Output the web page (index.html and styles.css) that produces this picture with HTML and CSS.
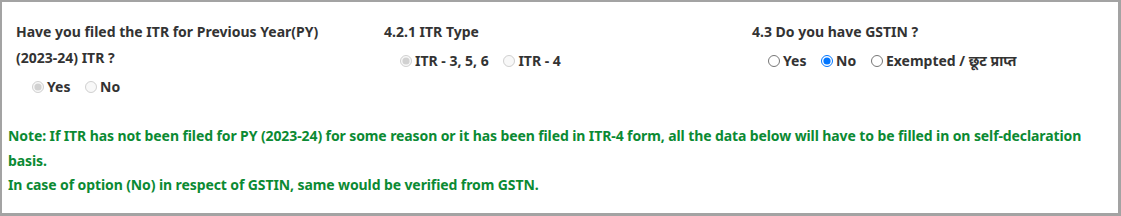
FILE: index.html
```html
<!DOCTYPE html>
<html lang="en">
<head>
  <meta charset="UTF-8">
  <title>ITR / GSTIN</title>
  <link rel="stylesheet" href="styles.css">
</head>
<body>
  <div class="marco">
    <div class="fila">
      <div class="campo">
        <div class="pregunta">Have you filed the ITR for Previous Year(PY) (2023-24) ITR ?</div>
        <div class="opciones">
          <label><input type="radio" name="itr" checked disabled>Yes</label>
          <label><input type="radio" name="itr" disabled>No</label>
        </div>
      </div>

      <div class="campo">
        <div class="pregunta">4.2.1 ITR Type</div>
        <div class="opciones">
          <label><input type="radio" name="tipo" checked disabled>ITR - 3, 5, 6</label>
          <label><input type="radio" name="tipo" disabled>ITR - 4</label>
        </div>
      </div>

      <div class="campo">
        <div class="pregunta">4.3 Do you have GSTIN ?</div>
        <div class="opciones">
          <label><input type="radio" name="gst">Yes</label>
          <label><input type="radio" name="gst" checked>No</label>
          <label><input type="radio" name="gst">Exempted / छूट प्राप्त</label>
        </div>
      </div>
    </div>

    <div class="nota">
      Note: If ITR has not been filed for PY (2023-24) for some reason or it has been filed in ITR-4 form, all the data below will have to be filled in on self-declaration basis.<br>
      In case of option (No) in respect of GSTIN, same would be verified from GSTN.
    </div>
  </div>
</body>
</html>
```

FILE: styles.css
```css
body {
  margin: 0;
  background: #a3a3a3;
  font-family: 'Noto Sans', 'Noto Sans Devanagari', sans-serif;
  font-size: 14px;
  font-weight: bold;
  color: #333;
}

.marco {
  background: #fff;
  margin: 2px 3px 3px 2px;
  height: 211px;
  padding: 0 6px;
  box-sizing: border-box;
}

.fila {
  display: flex;
  padding-top: 17px;
}

.campo {
  flex: 1;
  padding-left: 8px;
}

.pregunta {
  line-height: 26px;
  width: 320px;
}

.opciones {
  padding-left: 14px;
  margin-top: 5px;
  line-height: 22px;
}

.opciones label {
  margin-right: 9px;
  display: inline-flex;
  align-items: center;
}

.opciones input {
  width: 12px;
  height: 12px;
  margin: 0 3px 0 2px;
}

.nota {
  color: #0b8a33;
  letter-spacing: -0.1px;
  line-height: 24.5px;
  margin-top: 25px;
}
```
